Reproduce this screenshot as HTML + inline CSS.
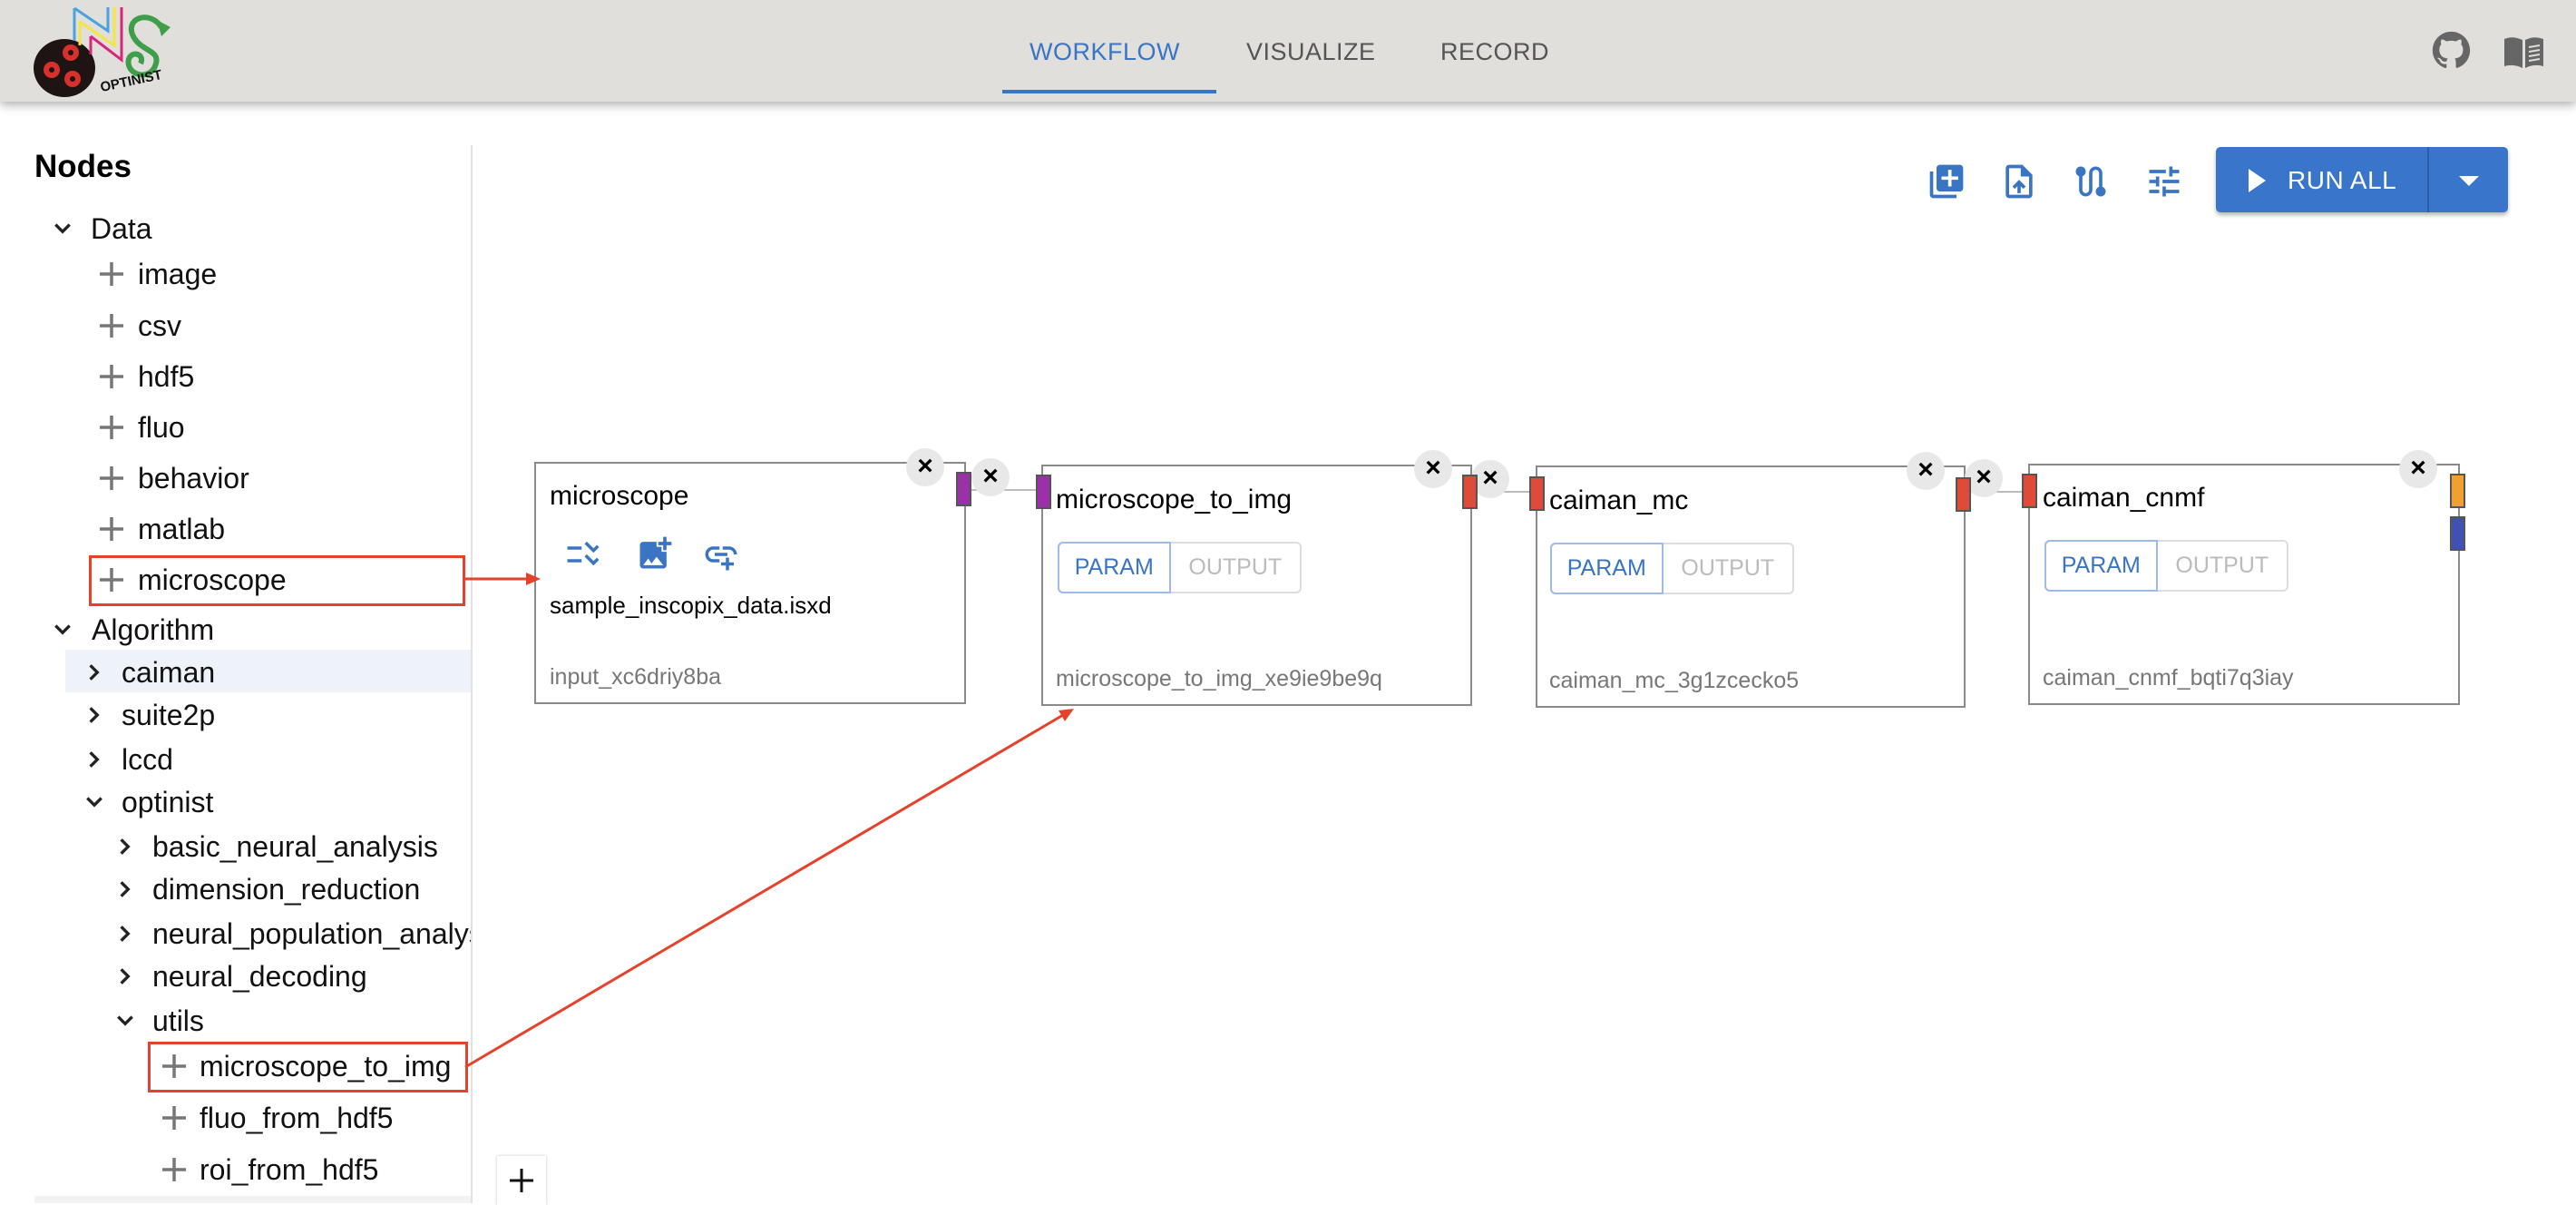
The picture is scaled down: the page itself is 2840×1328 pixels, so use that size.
<!DOCTYPE html>
<html><head><meta charset="utf-8"><style>
*{margin:0;padding:0;box-sizing:border-box}
body{width:2840px;height:1326px;overflow:hidden;background:#fff;font-family:"Liberation Sans",Arial,sans-serif;position:relative}
.abs{position:absolute}
.hdr{left:0;top:0;width:2840px;height:112px;background:#e0dfdb;box-shadow:0 4px 10px rgba(0,0,0,.3);z-index:5}
.tab{position:absolute;top:42px;font-size:27px;color:#555;letter-spacing:.5px}
.t{position:absolute;font-size:32px;color:#111;white-space:nowrap;line-height:40px}
.chev{position:absolute;width:22px;height:22px}
.plus{position:absolute;width:30px;height:30px}
.node{position:absolute;border:2px solid #8a8a8a;background:#fff}
.title{position:absolute;font-size:30px;color:#000;white-space:nowrap}
.nid{position:absolute;font-size:25px;color:#777;white-space:nowrap}
.cls{position:absolute;width:42px;height:42px;border-radius:50%;background:#e8e8e8;font-size:30px;font-weight:bold;text-align:center;line-height:40px;color:#000}
.h{position:absolute;width:17px;height:38px;border:2px solid #555;z-index:2}
.pg{position:absolute;height:57px;border:2px solid #ddd;border-radius:6px;display:flex}
.pg div{font-size:25px;line-height:53px;text-align:center}
.edge{position:absolute;height:2px;background:#bbb}
</style></head><body>
<div class="abs hdr">
 <svg class="abs" style="left:30px;top:0" width="170" height="110" viewBox="0 0 170 110">
  <ellipse cx="41" cy="75" rx="34" ry="32" fill="#1e1414"/>
  <g fill="#d8302a"><circle cx="48" cy="58" r="9"/><circle cx="27" cy="77" r="9"/><circle cx="50" cy="87" r="9"/></g>
  <g fill="#1e1414"><circle cx="48" cy="58" r="3"/><circle cx="27" cy="77" r="3"/><circle cx="50" cy="87" r="3"/></g>
  <path d="M52 9 L52 45 M52 9 L89 34 L89 8" stroke="#4aa3e0" stroke-width="3" fill="none"/>
  <path d="M58 24 L58 50 M58 24 L96 50 L96 8" stroke="#f4e542" stroke-width="3" fill="none"/>
  <path d="M70 40 L70 60 M70 40 L104 66 L104 8" stroke="#d6287a" stroke-width="3" fill="none"/>
  <path d="M148 30 C135 10 105 20 118 42 C128 58 150 55 140 75 C130 90 108 80 112 65 C116 55 130 60 125 70" stroke="#3f9e4a" stroke-width="6" fill="none"/>
  <path d="M143 22 L158 30 L148 40 Z" fill="#3f9e4a"/>
  <text x="80" y="95" font-size="15" font-weight="bold" fill="#111" transform="rotate(-12 110 90)">OPTINIST</text>
 </svg>
 <div class="tab" style="left:1135px;color:#3a75c4">WORKFLOW</div>
 <div class="abs" style="left:1105px;top:99px;width:236px;height:4px;background:#3a75c4"></div>
 <div class="tab" style="left:1374px">VISUALIZE</div>
 <div class="tab" style="left:1588px">RECORD</div>
 <svg class="abs" style="left:2680px;top:33px" width="45" height="45" viewBox="0 0 24 24"><path fill="#666" d="M12 1C5.9 1 1 5.9 1 12c0 4.9 3.2 9 7.5 10.4.5.1.7-.2.7-.5v-2c-3 .7-3.7-1.3-3.7-1.3-.5-1.3-1.2-1.6-1.2-1.6-1-.7.1-.7.1-.7 1.1.1 1.7 1.1 1.7 1.1 1 1.7 2.6 1.2 3.2.9.1-.7.4-1.2.7-1.5-2.4-.3-5-1.200-5-5.4 0-1.2.4-2.2 1.1-2.9-.1-.3-.5-1.4.1-2.9 0 0 .9-.3 3 1.1a10 10 0 015.5 0c2.1-1.4 3-1.1 3-1.1.6 1.5.2 2.6.1 2.9.7.8 1.1 1.7 1.1 2.9 0 4.2-2.6 5.1-5 5.4.4.3.8 1 .8 2v3c0 .3.2.6.8.5C19.8 21 23 16.9 23 12 23 5.9 18.1 1 12 1z"/></svg>
 <svg class="abs" style="left:2760px;top:40px" width="45" height="36" viewBox="0 0 45 36"><path fill="#666" d="M1 3 Q10 -1 21 4 L21 35 Q11 30 1 33 Z M24 4 Q34 -1 44 3 L44 33 Q34 30 24 35 Z"/><g stroke="#e0dfdb" stroke-width="2"><line x1="28" y1="12" x2="40" y2="10"/><line x1="28" y1="17" x2="40" y2="15"/><line x1="28" y1="22" x2="40" y2="20"/><line x1="28" y1="27" x2="40" y2="25"/></g></svg>
</div>

<div class="abs" style="left:519px;top:160px;width:2px;height:1166px;background:#e2e2e2"></div>
<div class="abs" style="left:38px;top:164px;font-size:35px;font-weight:bold">Nodes</div>
<div class="abs" style="left:72px;top:716px;width:447px;height:47px;background:#eef2f9"></div>

<svg width="0" height="0" style="position:absolute"><defs>
<symbol id="down" viewBox="0 0 20 20"><path d="M3 6 L10 13 L17 6" stroke="#222" stroke-width="3" fill="none"/></symbol>
<symbol id="right" viewBox="0 0 20 20"><path d="M6 3 L13 10 L6 17" stroke="#222" stroke-width="3" fill="none"/></symbol>
<symbol id="plus" viewBox="0 0 30 30"><path d="M15 2 V28 M2 15 H28" stroke="#777" stroke-width="3.5"/></symbol>
</defs></svg>

<svg class="chev" style="left:58px;top:241px"><use href="#down"/></svg><div class="t" style="left:100px;top:232px">Data</div>
<svg class="plus" style="left:108px;top:287px"><use href="#plus"/></svg><div class="t" style="left:152px;top:282px">image</div>
<svg class="plus" style="left:108px;top:344px"><use href="#plus"/></svg><div class="t" style="left:152px;top:339px">csv</div>
<svg class="plus" style="left:108px;top:400px"><use href="#plus"/></svg><div class="t" style="left:152px;top:395px">hdf5</div>
<svg class="plus" style="left:108px;top:456px"><use href="#plus"/></svg><div class="t" style="left:152px;top:451px">fluo</div>
<svg class="plus" style="left:108px;top:512px"><use href="#plus"/></svg><div class="t" style="left:152px;top:507px">behavior</div>
<svg class="plus" style="left:108px;top:568px"><use href="#plus"/></svg><div class="t" style="left:152px;top:563px">matlab</div>
<svg class="plus" style="left:108px;top:624px"><use href="#plus"/></svg><div class="t" style="left:152px;top:619px">microscope</div>
<div class="abs" style="left:98px;top:612px;width:415px;height:56px;border:3px solid #e5412b"></div>

<svg class="chev" style="left:58px;top:683px"><use href="#down"/></svg><div class="t" style="left:101px;top:674px">Algorithm</div>
<svg class="chev" style="left:93px;top:730px"><use href="#right"/></svg><div class="t" style="left:134px;top:721px">caiman</div>
<svg class="chev" style="left:93px;top:777px"><use href="#right"/></svg><div class="t" style="left:134px;top:768px">suite2p</div>
<svg class="chev" style="left:93px;top:826px"><use href="#right"/></svg><div class="t" style="left:134px;top:817px">lccd</div>
<svg class="chev" style="left:93px;top:873px"><use href="#down"/></svg><div class="t" style="left:134px;top:864px">optinist</div>
<svg class="chev" style="left:127px;top:922px"><use href="#right"/></svg><div class="t" style="left:168px;top:913px">basic_neural_analysis</div>
<svg class="chev" style="left:127px;top:969px"><use href="#right"/></svg><div class="t" style="left:168px;top:960px">dimension_reduction</div>
<div class="abs" style="left:0;top:1000px;width:519px;height:60px;overflow:hidden"><svg class="chev" style="left:127px;top:18px"><use href="#right"/></svg><div class="t" style="left:168px;top:9px">neural_population_analysis</div></div>
<svg class="chev" style="left:127px;top:1065px"><use href="#right"/></svg><div class="t" style="left:168px;top:1056px">neural_decoding</div>
<svg class="chev" style="left:127px;top:1114px"><use href="#down"/></svg><div class="t" style="left:168px;top:1105px">utils</div>
<svg class="plus" style="left:177px;top:1160px"><use href="#plus"/></svg><div class="t" style="left:220px;top:1155px">microscope_to_img</div>
<div class="abs" style="left:163px;top:1148px;width:353px;height:56px;border:3px solid #e5412b"></div>
<svg class="plus" style="left:177px;top:1217px"><use href="#plus"/></svg><div class="t" style="left:220px;top:1212px">fluo_from_hdf5</div>
<svg class="plus" style="left:177px;top:1274px"><use href="#plus"/></svg><div class="t" style="left:220px;top:1269px">roi_from_hdf5</div>
<div class="abs" style="left:38px;top:1318px;width:481px;height:8px;background:#f2f2f2"></div>

<svg class="abs" style="left:0;top:0;z-index:3" width="2840" height="1326">
 <line x1="513" y1="638" x2="582" y2="638" stroke="#e5412b" stroke-width="3"/>
 <path d="M596 638 L580 631 L580 645 Z" fill="#e5412b"/>
 <line x1="513" y1="1176" x2="1172" y2="788" stroke="#e5412b" stroke-width="3"/>
 <path d="M1184 781 L1167 783 L1174 795 Z" fill="#e5412b"/>
</svg>

<svg class="abs" style="left:2124px;top:178px" width="44" height="44" viewBox="0 0 24 24"><path fill="#3a75c4" d="M4 6H2v14c0 1.1.9 2 2 2h14v-2H4V6zm16-4H8c-1.1 0-2 .9-2 2v12c0 1.1.9 2 2 2h12c1.1 0 2-.9 2-2V4c0-1.1-.9-2-2-2zm-1 9h-4v4h-2v-4H9V9h4V5h2v4h4v2z"/></svg>
<svg class="abs" style="left:2204px;top:178px" width="44" height="44" viewBox="0 0 24 24"><path fill="#3a75c4" d="M14 2H6c-1.1 0-2 .9-2 2v16c0 1.1.9 2 2 2h12c1.1 0 2-.9 2-2V8l-6-6zm4 18H6V4h7v5h5v11zM8 15.01l1.41 1.41L11 14.840V19h2v-4.16l1.59 1.59L16 15.01 12.01 11z"/></svg>
<svg class="abs" style="left:2283px;top:178px" width="44" height="44" viewBox="0 0 24 24"><path fill="#3a75c4" d="M19 15.18V7c0-2.21-1.79-4-4-4s-4 1.790-4 4v10c0 1.1-.9 2-2 2s-2-.9-2-2V8.820C8.16 8.4 9 7.3 9 6c0-1.66-1.34-3-3-3S3 4.34 3 6c0 1.3.84 2.4 2 2.820V17c0 2.21 1.79 4 4 4s4-1.79 4-4V7c0-1.1.9-2 2-2s2 .9 2 2v8.18c-1.16.41-2 1.51-2 2.82 0 1.66 1.34 3 3 3s3-1.34 3-3c0-1.3-.84-2.4-2-2.82z"/></svg>
<svg class="abs" style="left:2364px;top:178px" width="44" height="44" viewBox="0 0 24 24"><path fill="#3a75c4" d="M3 17v2h6v-2H3zM3 5v2h10V5H3zm10 16v-2h8v-2h-8v-2h-2v6h2zM7 9v2H3v2h4v2h2V9H7zm14 4v-2H11v2h10zm-6-4h2V7h4V5h-4V3h-2v6z"/></svg>
<div class="abs" style="left:2443px;top:162px;width:322px;height:72px;background:#3a75cc;border-radius:5px;box-shadow:0 3px 5px rgba(0,0,0,.3)">
 <svg class="abs" style="left:36px;top:24px" width="20" height="26"><path d="M0 0 L19 13 L0 26Z" fill="#fff"/></svg>
 <div class="abs" style="left:79px;top:21px;font-size:28px;color:#fff;letter-spacing:.5px">RUN ALL</div>
 <div class="abs" style="left:233px;top:0;width:2px;height:72px;background:#2c5ea8"></div>
 <svg class="abs" style="left:268px;top:32px" width="22" height="12"><path d="M0 0 L22 0 L11 11Z" fill="#fff"/></svg>
</div>

<div class="edge" style="left:1071px;top:539px;width:74px"></div>
<div class="edge" style="left:1629px;top:541px;width:58px"></div>
<div class="edge" style="left:2173px;top:541px;width:58px"></div>

<div class="node" style="left:589px;top:509px;width:476px;height:267px"></div>
<div class="title" style="left:606px;top:530px">microscope</div>
<svg class="abs" style="left:622px;top:590px" width="42" height="42" viewBox="0 0 24 24"><path fill="#3a75c4" d="M22 7h-9v2h9V7zm0 8h-9v2h9v-2zM5.54 11L2 7.46l1.41-1.41 2.12 2.12 4.24-4.24 1.41 1.41L5.54 11zm0 8L2 15.46l1.41-1.41 2.12 2.12 4.24-4.24 1.41 1.41L5.54 19z" transform="translate(24 0) scale(-1 1)"/></svg>
<svg class="abs" style="left:700px;top:588px" width="44" height="44" viewBox="0 0 24 24"><path fill="#3a75c4" d="M19 7v2.99s-1.99.01-2 0V7h-3s.01-1.99 0-2h3V2h2v3h3v2h-3zm-3 4V8h-3V5H5c-1.1 0-2 .9-2 2v12c0 1.1.9 2 2 2h12c1.1 0 2-.9 2-2v-8h-3zM5 19l3-4 2 3 3-4 4 5H5z"/></svg>
<svg class="abs" style="left:774px;top:590px" width="42" height="42" viewBox="0 0 24 24"><path fill="#3a75c4" d="M17 7h-4v2h4c1.65 0 3 1.35 3 3h2c0-2.76-2.24-5-5-5zM11 15H7c-1.65 0-3-1.35-3-3s1.35-3 3-3h4V7H7c-2.76 0-5 2.24-5 5s2.24 5 5 5h4v-2zM8 11h8v2H8zm9 3h-2v3h-3v2h3v3h2v-3h3v-2h-3z"/></svg>
<div class="abs" style="left:606px;top:652px;font-size:26px;color:#000">sample_inscopix_data.isxd</div>
<div class="nid" style="left:606px;top:732px">input_xc6driy8ba</div>
<div class="cls" style="left:999px;top:494px">×</div>
<div class="h" style="left:1054px;top:520px;background:#9b30a8"></div>
<div class="cls" style="left:1071px;top:505px">×</div>

<div class="node" style="left:1148px;top:512px;width:475px;height:266px"></div>
<div class="h" style="left:1142px;top:523px;background:#9b30a8"></div>
<div class="title" style="left:1164px;top:534px">microscope_to_img</div>
<div class="pg" style="left:1166px;top:597px;width:269px"><div style="width:125px;color:#3a75c4;border:2px solid #9dbde8;border-radius:6px 0 0 6px;margin:-2px 0 -2px -2px">PARAM</div><div style="width:143px;color:#bbb">OUTPUT</div></div>
<div class="nid" style="left:1164px;top:734px">microscope_to_img_xe9ie9be9q</div>
<div class="cls" style="left:1559px;top:496px">×</div>
<div class="cls" style="left:1622px;top:507px">×</div>
<div class="h" style="left:1612px;top:523px;background:#e04a38"></div>

<div class="node" style="left:1693px;top:513px;width:474px;height:267px"></div>
<div class="h" style="left:1686px;top:525px;background:#e04a38"></div>
<div class="title" style="left:1708px;top:535px">caiman_mc</div>
<div class="pg" style="left:1709px;top:598px;width:269px"><div style="width:125px;color:#3a75c4;border:2px solid #9dbde8;border-radius:6px 0 0 6px;margin:-2px 0 -2px -2px">PARAM</div><div style="width:143px;color:#bbb">OUTPUT</div></div>
<div class="nid" style="left:1708px;top:736px">caiman_mc_3g1zcecko5</div>
<div class="cls" style="left:2102px;top:498px">×</div>
<div class="cls" style="left:2166px;top:506px">×</div>
<div class="h" style="left:2156px;top:526px;background:#e04a38"></div>

<div class="node" style="left:2236px;top:511px;width:476px;height:266px"></div>
<div class="h" style="left:2229px;top:522px;background:#e04a38"></div>
<div class="title" style="left:2252px;top:532px">caiman_cnmf</div>
<div class="pg" style="left:2254px;top:595px;width:269px"><div style="width:125px;color:#3a75c4;border:2px solid #9dbde8;border-radius:6px 0 0 6px;margin:-2px 0 -2px -2px">PARAM</div><div style="width:143px;color:#bbb">OUTPUT</div></div>
<div class="nid" style="left:2252px;top:733px">caiman_cnmf_bqti7q3iay</div>
<div class="cls" style="left:2645px;top:496px">×</div>
<div class="h" style="left:2701px;top:522px;background:#f0a030"></div>
<div class="h" style="left:2701px;top:569px;background:#3f51b5"></div>

<div class="abs" style="left:548px;top:1274px;width:54px;height:54px;background:#fff;box-shadow:0 0 3px rgba(0,0,0,.25)"></div>
<svg class="abs" style="left:561px;top:1287px" width="28" height="28"><path d="M14 1 V27 M1 14 H27" stroke="#111" stroke-width="3"/></svg>
</body></html>
